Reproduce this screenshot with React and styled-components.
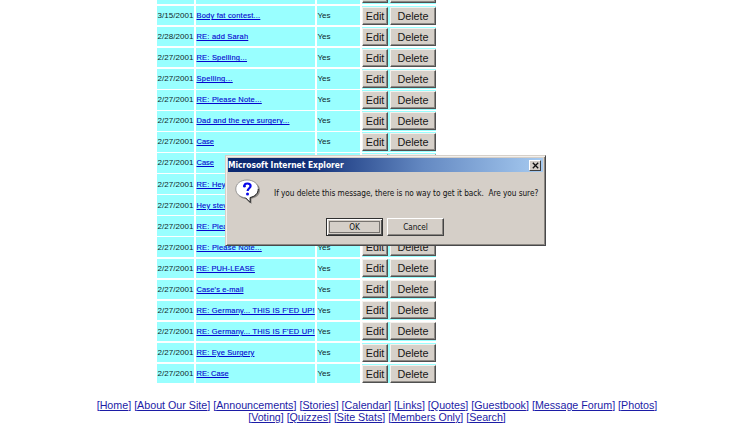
import React from 'react';
import styled, { createGlobalStyle } from 'styled-components';

const Global = createGlobalStyle`
  * { box-sizing: border-box; }
  html, body { margin: 0; background: #fff; overflow: hidden; }
  body { font-family: "Liberation Sans", Arial, sans-serif; }
`;

const Page = styled.main`
  position: relative;
  width: 750px;
  height: 432px;
  overflow: hidden;
  background: #fff;
`;

const MessageTable = styled.section`
  display: grid;
  grid-auto-rows: 19.55px;
  row-gap: 1.53px;
  width: 279px;
  margin: -15.3px 0 0 157px;
`;

const Row = styled.div`
  display: grid;
  grid-template-columns: 37px 119px 43px 74px;
  column-gap: 2px;
`;

const Cell = styled.div`
  display: flex;
  align-items: center;
  padding: 1px 0 0 0.5px;
  overflow: hidden;
  background: #99ffff;
  color: #10272a;
  font-size: 8px;
  line-height: 10px;
  white-space: nowrap;
  letter-spacing: ${(p) => p.$spacing || 0}px;
`;

const Subject = styled.a`
  color: #0505d0;
  font-size: 7.5px;
  letter-spacing: ${(p) => p.$spacing}px;
  text-decoration: underline;
  text-underline-offset: 1px;
  text-decoration-thickness: 1px;
  -webkit-text-stroke: 0.12px currentColor;
`;

const Actions = styled(Cell)`
  gap: 2px;
  padding: 0;
`;

const RowButton = styled.button`
  width: ${(p) => p.$width}px;
  height: 18px;
  padding: 0;
  border: 1px solid;
  border-color: #f4f1ed #505050 #505050 #f4f1ed;
  box-shadow: inset -1px -1px #8d8984;
  background: #d6d0c9;
  color: #161616;
  font: 10.8px/14px "Liberation Sans", Arial, sans-serif;
  letter-spacing: ${(p) => p.$spacing}px;
`;

const Footer = styled.footer`
  display: flex;
  flex-direction: column;
  align-items: center;
  width: 750px;
  margin-top: 15.5px;
  padding-left: 4px;
  color: #2020b0;
  font-size: 10.7px;
  line-height: 12px;
`;

const FooterLine = styled.nav`
  white-space: nowrap;
  letter-spacing: ${(p) => p.$spacing}px;
`;

const FooterLink = styled.a`
  color: #1c1ca6;
  text-decoration: underline;
  text-decoration-thickness: 1px;
  text-underline-offset: 1px;
`;

const Dialog = styled.section`
  position: absolute;
  left: 225px;
  top: 155px;
  width: 321px;
  height: 91px;
  display: flex;
  flex-direction: column;
  padding: 2px;
  border: 1px solid;
  border-color: #d6d0c9 #48484a #48484a #d6d0c9;
  box-shadow: inset 1px 1px #f3f0ec, inset -1px -1px #8b8782;
  background: #d5cfc8;
  color: #111;
  font-family: "DejaVu Sans Condensed", "DejaVu Sans", sans-serif;
  font-stretch: condensed;
`;

const TitleBar = styled.header`
  display: flex;
  align-items: center;
  justify-content: space-between;
  flex: none;
  height: 14px;
  padding: 0 2px 0 0;
  background: linear-gradient(90deg, #0b2870 0%, #102e77 25%, #6489c2 62%, #a6caf0 100%);
`;

const Title = styled.h1`
  margin: 0;
  color: #fff;
  font-size: 8.4px;
  line-height: 12px;
  font-weight: 700;
  letter-spacing: ${(p) => p.$spacing}px;
  white-space: nowrap;
`;

const CloseButton = styled.button`
  display: grid;
  place-items: center;
  width: 12px;
  height: 11px;
  padding: 0;
  border: 1px solid;
  border-color: #fff #404040 #404040 #fff;
  background: #d5cfc8;
`;

const Body = styled.div`
  display: flex;
  align-items: flex-start;
  height: 46px;
  padding: 7px 0 0 7px;
`;

const Message = styled.p`
  margin: 8px 0 0 13px;
  font-size: 8.2px;
  line-height: 12px;
  white-space: pre;
  letter-spacing: ${(p) => p.$spacing}px;
`;

const DialogActions = styled.div`
  display: flex;
  gap: 4px;
  padding-left: 98px;
`;

const DialogButton = styled.button`
  width: 57px;
  height: 18px;
  padding: 0;
  border: 1px solid;
  border-color: ${(p) => (p.$focused ? '#303030' : '#fff #444 #444 #fff')};
  box-shadow: ${(p) =>
    p.$focused
      ? 'inset 1px 1px #fff, inset -1px -1px #555, inset 0 0 0 2px #d5cfc8, inset 0 0 0 3px #77736f'
      : 'inset -1px -1px #8b8782'};
  background: #d5cfc8;
  color: #111;
  font: 8.2px/12px "DejaVu Sans Condensed", "DejaVu Sans", sans-serif;
  font-stretch: condensed;
  letter-spacing: -0.1px;
`;

const rows = [
  ['3/15/2001', '', 0],
  ['3/15/2001', 'Body fat contest...', 0.2],
  ['2/28/2001', 'RE: add Sarah', 0.2],
  ['2/27/2001', 'RE: Spelling...', 0.2],
  ['2/27/2001', 'Spelling...', 0.3],
  ['2/27/2001', 'RE: Please Note...', 0.2],
  ['2/27/2001', 'Dad and the eye surgery...', 0.2],
  ['2/27/2001', 'Case', 0],
  ['2/27/2001', 'Case', 0],
  ['2/27/2001', 'RE: Hey steve', 0.2],
  ['2/27/2001', 'Hey steve', 0.2],
  ['2/27/2001', 'RE: Please Note...', 0.2],
  ['2/27/2001', 'RE: Please Note...', 0.2],
  ['2/27/2001', 'RE: PUH-LEASE', 0.1],
  ['2/27/2001', "Case's e-mail", 0.14],
  ['2/27/2001', "RE: Germany... THIS IS F'ED UP!", 0.19],
  ['2/27/2001', "RE: Germany... THIS IS F'ED UP!", 0.19],
  ['2/27/2001', 'RE: Eye Surgery', 0.14],
  ['2/27/2001', 'RE: Case', 0],
];

const footerLines = [
  { spacing: 0, links: ['Home', 'About Our Site', 'Announcements', 'Stories', 'Calendar', 'Links', 'Quotes', 'Guestbook', 'Message Forum', 'Photos'] },
  { spacing: -0.03, links: ['Voting', 'Quizzes', 'Site Stats', 'Members Only', 'Search'] },
];

function QuestionIcon() {
  return (
    <svg width="26" height="26" viewBox="0 0 26 26" aria-hidden="true">
      <path d="M13 2.5c7 0 12 3.7 12 8.7 0 4.3-3.6 7.6-8.5 8.5v5.3l-5-5C5.600 19.600 2 16 2 11.200 2 6 6.500 2.500 13 2.500Z" fill="#8a8681" />
      <path d="M12 1c6.600 0 11.300 3.800 11.300 9 0 4.500-3.500 7.700-8.100 8.500v5L10.500 18.800C4.800 18.200.8 14.800.8 10 .8 4.800 5.500 1 12 1Z" fill="#fff" stroke="#777" strokeWidth=".7" />
      <path d="M23.300 10c0 4.500-3.500 7.700-8.100 8.500v5L10.500 18.800" fill="none" stroke="#222" strokeWidth="1" />
      <path d="M9.200 7.700c0-2.100 1.200-3.200 3.100-3.200 2 0 3.300 1 3.300 2.600 0 2-3 2.400-3 5" fill="none" stroke="#0808e8" strokeWidth="2.200" />
      <circle cx="9.400" cy="7.300" r="1.300" fill="#0808e8" />
      <circle cx="12.500" cy="15" r="1.500" fill="#0808e8" />
    </svg>
  );
}

export default function App() {
  return (
    <>
      <Global />
      <Page>
        <MessageTable>
          {rows.map(([date, subject, spacing], i) => (
            <Row key={i}>
              <Cell $spacing={0.06}>{i > 0 && date}</Cell>
              <Cell><Subject $spacing={spacing}>{subject}</Subject></Cell>
              <Cell $spacing={0}>{i > 0 && 'Yes'}</Cell>
              <Actions>
                <RowButton $width={26} $spacing={0}>{i > 0 && 'Edit'}</RowButton>
                <RowButton $width={46} $spacing={0}>{i > 0 && 'Delete'}</RowButton>
              </Actions>
            </Row>
          ))}
        </MessageTable>
        <Footer>
          {footerLines.map(({ spacing, links }) => (
            <FooterLine key={links[0]} $spacing={spacing}>
              {links.map((name, i) => (
                <React.Fragment key={name}>
                  {i > 0 && ' '}[<FooterLink>{name}</FooterLink>]
                </React.Fragment>
              ))}
            </FooterLine>
          ))}
        </Footer>
        <Dialog role="dialog">
          <TitleBar>
            <Title $spacing={0}>Microsoft Internet Explorer</Title>
            <CloseButton aria-label="Close">
              <svg width="7" height="7" viewBox="0 0 7 7"><path d="M.8.8 6.200 6.200M6.200.8.8 6.200" stroke="#111" strokeWidth="1.300" /></svg>
            </CloseButton>
          </TitleBar>
          <Body>
            <QuestionIcon />
            <Message $spacing={-0.04}>{'If you delete this message, there is no way to get it back.  Are you sure?'}</Message>
          </Body>
          <DialogActions>
            <DialogButton $focused>OK</DialogButton>
            <DialogButton>Cancel</DialogButton>
          </DialogActions>
        </Dialog>
      </Page>
    </>
  );
}
